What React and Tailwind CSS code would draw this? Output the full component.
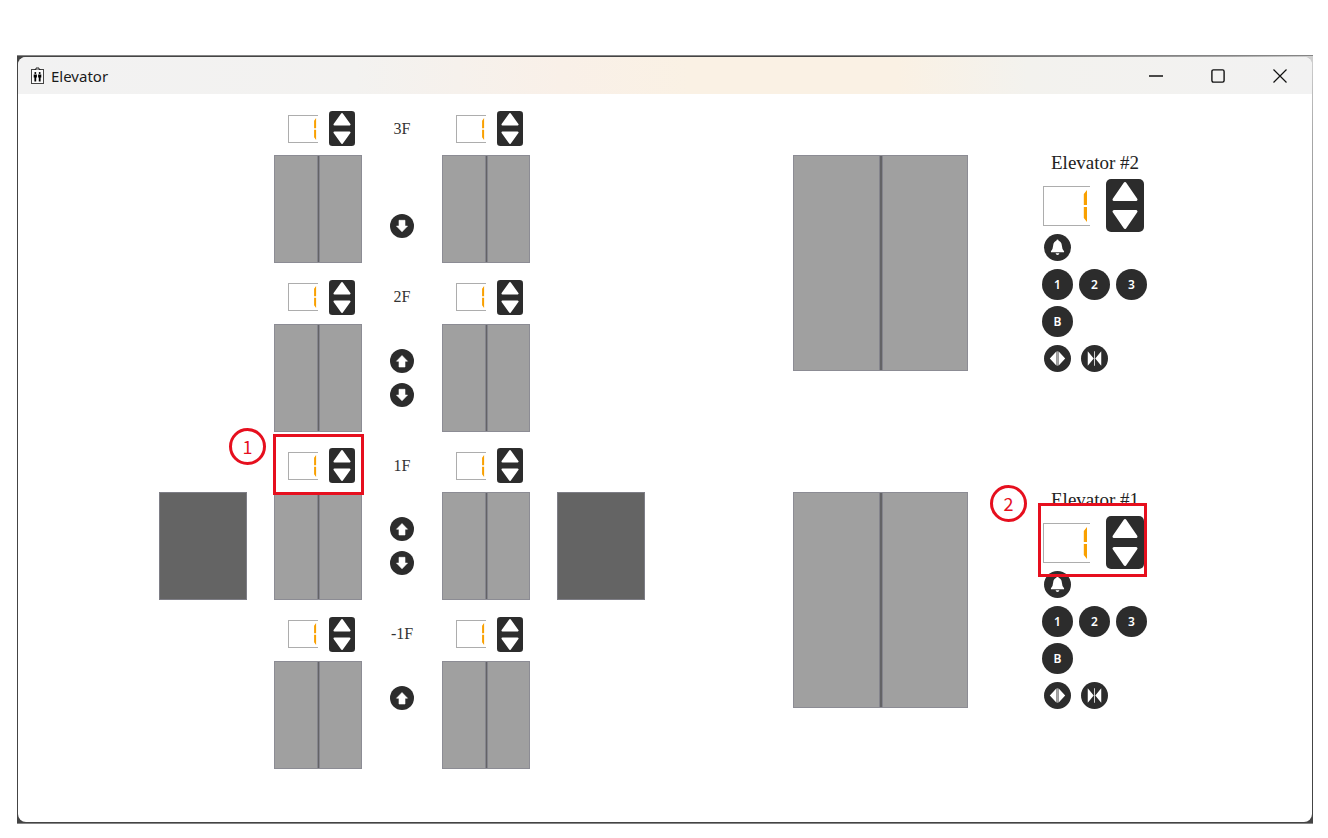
const FLOORS = [
  { id: "3F", down: true },
  { id: "2F", up: true, down: true },
  { id: "1F", up: true, down: true, lobby: true },
  { id: "-1F", up: true },
];

const CARS = [{ name: "Elevator #2" }, { name: "Elevator #1", note: true }];

function AppIcon() {
  return (
    <svg viewBox="0 0 13 18" className="h-[18px] w-[13px]" aria-hidden="true">
      <rect x="0.5" y="2.5" width="12" height="14" fill="#fafafa" stroke="#444" />
      <path d="M3.500 2.500h1.500V1h3v1.500h1.500" fill="#fafafa" stroke="#222" />
      <circle cx="4.300" cy="6" r="1" />
      <circle cx="8.700" cy="6" r="1" />
      <path d="M2.700 7.500h3.200v3h-.7v4H3.400v-4h-.7zM7.100 7.500h3.200v3h-.7v4H7.800v-4h-.7z" />
    </svg>
  );
}

function TitleBar() {
  return (
    <header className="flex h-[37px] shrink-0 items-center justify-between bg-[linear-gradient(to_right,#f2f2f2,#f3f2f0_26%,#f9f0e8_42%,#faf1e4_52%,#faf1e4_68%,#f3f2ee_78%,#f2f2f2)] pl-[13px]">
      <div className="flex items-center gap-[7px]">
        <AppIcon />
        <h1 className="font-['Noto_Sans','Open_Sans',sans-serif] text-[15px] leading-5 text-[#1a1a1a]">Elevator</h1>
      </div>
      <div className="flex h-full">
        <button aria-label="Minimize" className="grid w-[62px] place-items-center">
          <svg viewBox="0 0 14 14" className="size-3.5" stroke="#111" strokeWidth="1.4">
            <path d="M0 7h14" />
          </svg>
        </button>
        <button aria-label="Maximize" className="grid w-[61px] place-items-center">
          <svg viewBox="0 0 14 14" className="size-3.5" fill="none" stroke="#111" strokeWidth="1.4">
            <rect x="0.9" y="0.9" width="12.2" height="12.2" rx="1.5" />
          </svg>
        </button>
        <button aria-label="Close" className="grid w-16 place-items-center">
          <svg viewBox="0 0 14 14" className="size-3.5" stroke="#111" strokeWidth="1.2">
            <path d="M0.500 0.500l13 13M13.500 0.500l-13 13" />
          </svg>
        </button>
      </div>
    </header>
  );
}

function Digit({ className }) {
  return (
    <div role="img" aria-label="Floor 1" className={`border border-r-0 border-[#adadad] bg-white ${className}`}>
      <svg viewBox="0 0 46 38" preserveAspectRatio="none" className="size-full" aria-hidden="true">
        <path d="M43 3v15h-3.200V7zM43 20v15l-3.200-4V20z" fill="#f9a000" />
      </svg>
    </div>
  );
}

function Direction({ className }) {
  return (
    <svg viewBox="0 0 38 53" preserveAspectRatio="none" className={className} aria-hidden="true">
      <rect width="38" height="53" rx="5" fill="#2c2c2c" />
      <path
        d="M19 4.500L30 20.500H8zM19 48.500L30 32.500H8z"
        fill="#fff"
        stroke="#fff"
        strokeWidth="3"
        strokeLinejoin="round"
      />
    </svg>
  );
}

function Door({ className, seam }) {
  return (
    <div className={`flex justify-center border border-[#8c8c94] bg-[#a0a0a0] ${className}`}>
      <div className={`border-x border-[#85858d] bg-[#636366] ${seam}`} />
    </div>
  );
}

function Counterweight() {
  return <div className="h-[108px] self-end border border-[#7e7e86] bg-[#646464]" />;
}

function Note({ number, circle, box }) {
  return (
    <>
      <div className={`pointer-events-none absolute z-10 border-3 border-[#e60f1e] ${box}`} />
      <div
        className={`pointer-events-none absolute z-10 grid size-[37px] place-items-center rounded-full border-3 border-[#e60f1e] pb-px font-['Noto_Sans_CJK_SC',sans-serif] text-lg leading-5 font-normal text-[#e60f1e] ${circle}`}
      >
        {number}
      </div>
    </>
  );
}

function Landing({ note }) {
  return (
    <div className="relative flex flex-col gap-[9px]">
      <div className="flex items-center gap-[11px] pl-3.5">
        <Digit className="h-7 w-[30px]" />
        <Direction className="h-[35px] w-[26px]" />
      </div>
      <Door className="h-[108px]" seam="w-[3px]" />
      {note && <Note number="1" box="-top-[14px] -left-px h-[61px] w-[91px]" circle="-top-[20px] -left-[45px]" />}
    </div>
  );
}

function CallButton({ floor, up }) {
  return (
    <button
      aria-label={`Call ${up ? "up" : "down"} from ${floor}`}
      className={`size-6 rounded-full bg-[#2c2c2c] ${up ? "row-start-1" : "row-start-2"}`}
    >
      <svg viewBox="0 0 24 24" className="size-6" fill="#fff" stroke="#fff" strokeWidth="0.6" strokeLinejoin="round">
        {up ? <path d="M12 6.500l5.500 5.700H15V18H9v-5.800H6.500z" /> : <path d="M12 17.800l5.500-5.700H15V6.300H9v5.800H6.500z" />}
      </svg>
    </button>
  );
}

function Floor({ floor }) {
  return (
    <section
      aria-label={`Floor ${floor.id}`}
      className="grid min-h-[156px] flex-1 grid-cols-[88px_88px_26px_88px_88px] content-start gap-x-[27px]"
    >
      {floor.lobby ? <Counterweight /> : <div />}
      <Landing note={floor.lobby} />
      <div className="flex flex-col items-center gap-[9px]">
        <h2 className="grid h-[35px] place-items-center font-['Liberation_Serif',serif] text-base whitespace-nowrap text-[#333]">
          {floor.id}
        </h2>
        <div className="grid h-[108px] grid-rows-[24px_24px] content-center gap-2.5">
          {floor.up && <CallButton floor={floor.id} up />}
          {floor.down && <CallButton floor={floor.id} />}
        </div>
      </div>
      <Landing />
      {floor.lobby && <Counterweight />}
    </section>
  );
}

const round = "grid place-items-center rounded-full bg-[#2c2c2c] text-white";

function FloorButton({ children, className = "" }) {
  return (
    <button className={`${round} size-[31px] font-['Noto_Sans',sans-serif] text-xs leading-4 font-semibold ${className}`}>
      {children}
    </button>
  );
}

function ActionButton({ label, className = "", children }) {
  return (
    <button aria-label={label} className={`${round} size-[27px] ${className}`}>
      <svg viewBox="0 0 28 28" className="size-[27px]" fill="#fff">
        {children}
      </svg>
    </button>
  );
}

function Car({ car }) {
  return (
    <section aria-label={car.name} className="flex min-h-[300px] flex-1 items-start gap-[74px] pt-11">
      <Door className="h-[216px] w-[175px]" seam="w-1" />
      <div className="relative">
        <h2 className="pl-[9px] font-['Liberation_Serif',serif] text-[19px] leading-4 whitespace-nowrap text-[#222]">
          {car.name}
        </h2>
        <div className="mt-2 flex items-center gap-4 pl-px">
          <Digit className="h-10 w-[47px]" />
          <Direction className="h-[53px] w-[38px]" />
        </div>
        <div className="grid grid-cols-[31px_31px_31px] grid-rows-[31px_31px_31px_31px] place-items-center gap-1.5">
          <ActionButton label="Alarm">
            <path d="M14 5.800q1 0 1.200 1.200 3 1 3.300 5 .2 4 2.300 5.800v1H7.200v-1q2.100-1.800 2.300-5.800.3-4 3.300-5Q13 5.800 14 5.800zM12 20h4q-.4 1.900-2 1.900T12 20z" />
          </ActionButton>
          <FloorButton className="row-start-2">1</FloorButton>
          <FloorButton className="row-start-2">2</FloorButton>
          <FloorButton className="row-start-2">3</FloorButton>
          <FloorButton className="row-start-3">B</FloorButton>
          <ActionButton label="Open doors" className="row-start-4">
            <path d="M6 14l7-7.500v15zM22 14l-7-7.500v15zM13.700 6.500h.6v15h-.6z" />
          </ActionButton>
          <ActionButton label="Close doors" className="row-start-4">
            <path d="M13.200 14L7 6.500v15zM14.800 14L21 6.500v15zM13.600 6.500h.8v15h-.8z" />
          </ActionButton>
        </div>
        {car.note && <Note number="2" box="top-[11px] -left-1 h-[74px] w-[109px]" circle="-top-[7px] -left-[52px]" />}
      </div>
    </section>
  );
}

export default function App() {
  return (
    <div className="flex min-h-screen flex-col bg-white pt-[55px] pr-[15px] pb-[14px] pl-[17px]">
      <div className="flex flex-1 flex-col border-y border-[#858585] bg-[radial-gradient(circle_at_100%_0,#d0d0d0,#a8a8a8_80px,#444_480px)] px-px pt-px pb-px">
        <div className="flex flex-1 flex-col overflow-hidden rounded-lg bg-white">
          <TitleBar />
          <main className="flex flex-1 justify-center gap-[148px] pt-[17px] pr-6 pb-[37px]">
            <div className="flex flex-col">
              {FLOORS.map((floor) => (
                <Floor key={floor.id} floor={floor} />
              ))}
            </div>
            <div className="flex flex-col">
              {CARS.map((car) => (
                <Car key={car.name} car={car} />
              ))}
            </div>
          </main>
        </div>
      </div>
    </div>
  );
}
